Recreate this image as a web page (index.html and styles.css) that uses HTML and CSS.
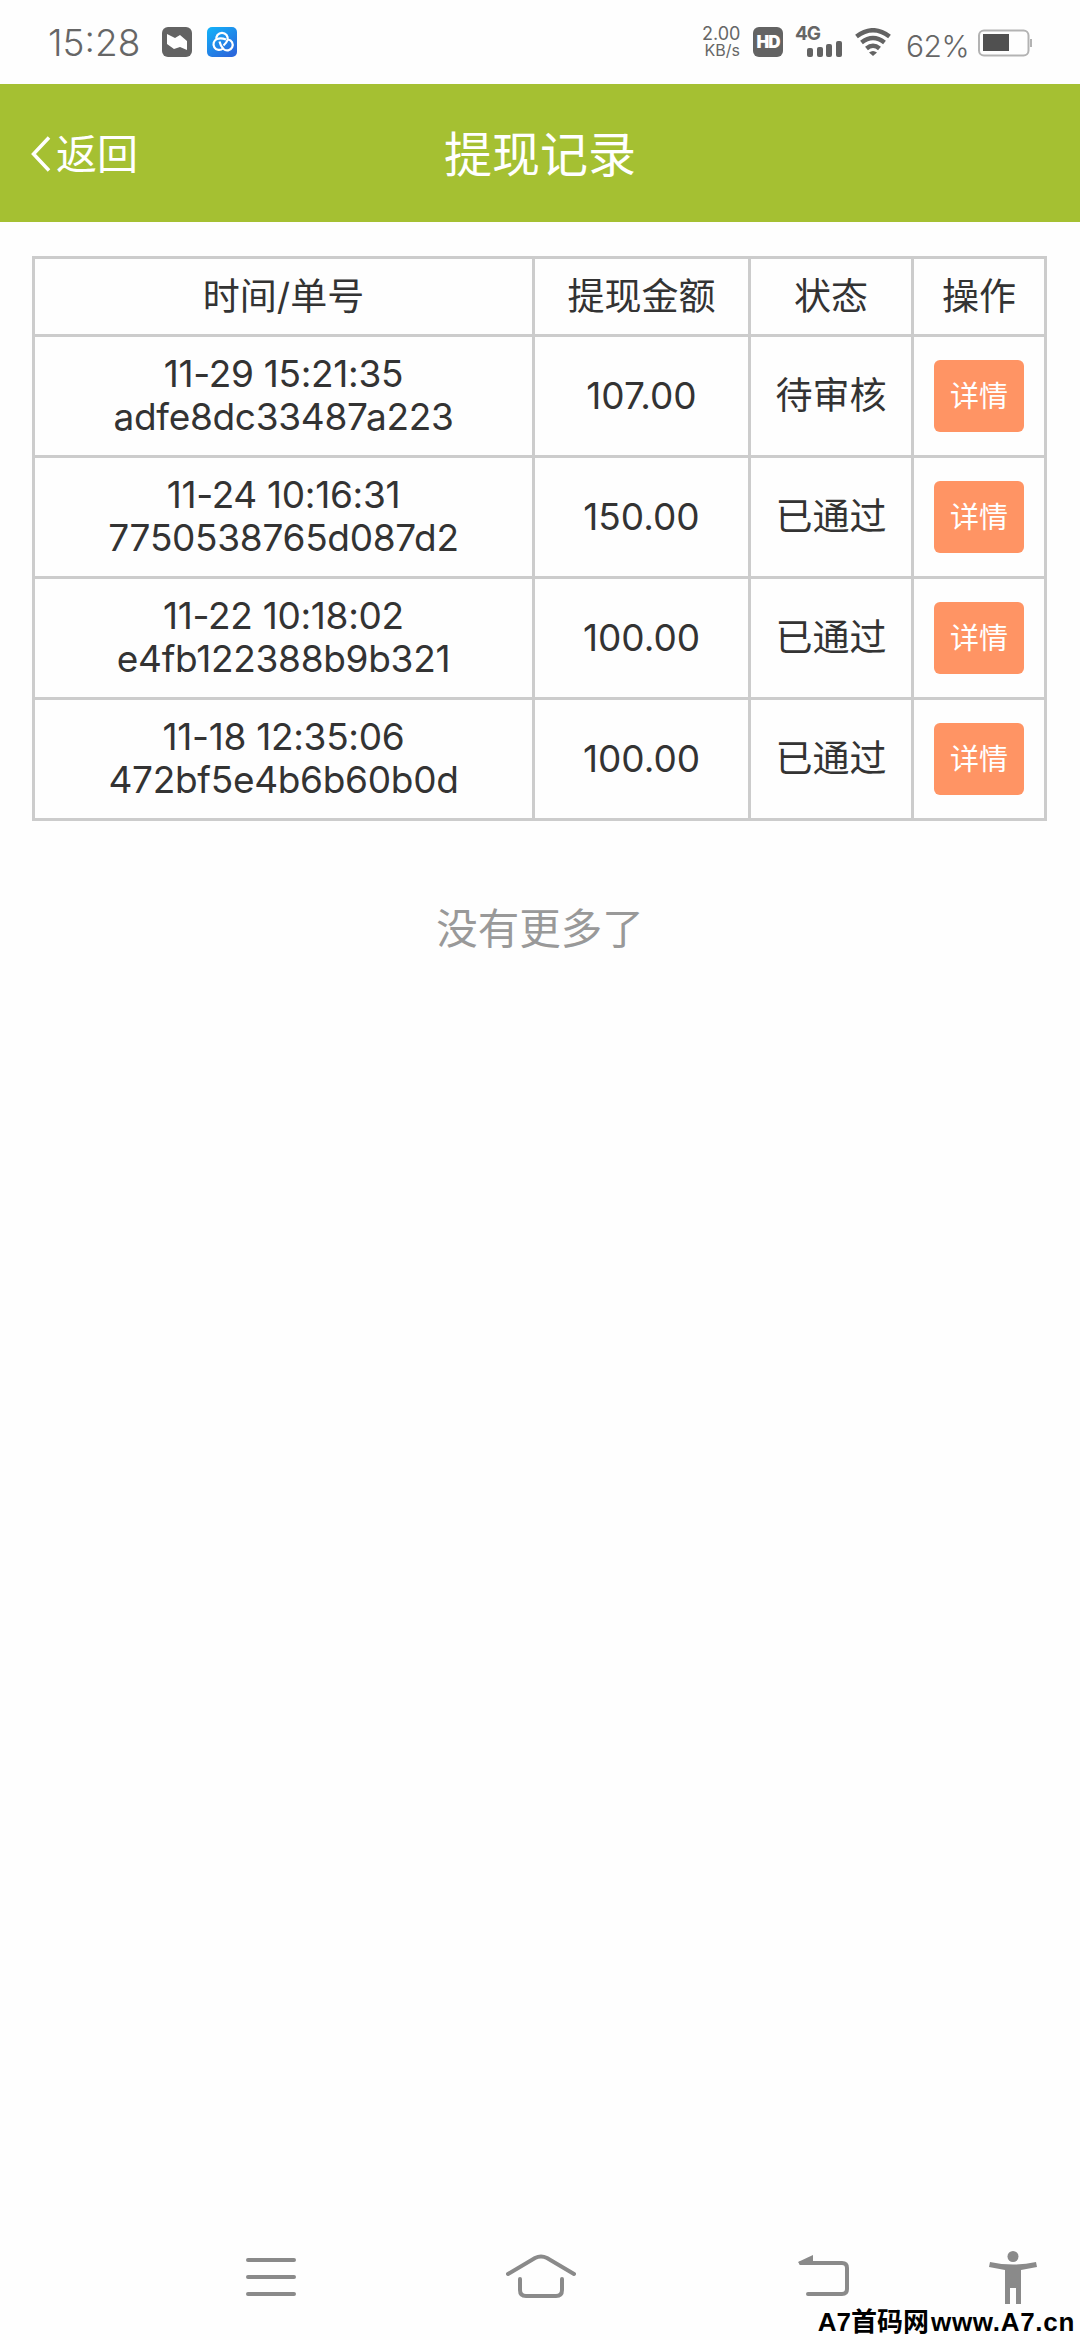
FILE: index.html
```html
<!DOCTYPE html>
<html lang="zh-CN">

<head>
  <meta charset="UTF-8">
  <title>提现记录</title>
  <link rel="stylesheet" href="styles.css">
</head>

<body>
  <div class="page">
    <div class="status-bar">
      <span class="time">15:28</span>
      <svg class="app-icon" width="30" height="30" viewBox="0 0 30 30">
        <rect width="30" height="30" rx="6" fill="#636363" />
        <path d="M5 7l8 4 5-3 7 6v9l-7-3-6 2-7-5z" fill="#fff" />
      </svg>
      <svg class="app-icon-blue" width="30" height="30" viewBox="0 0 30 30">
        <defs>
          <linearGradient id="blue" x1="0" y1="0" x2="0.7" y2="1">
            <stop offset="0" stop-color="#12b4fa" />
            <stop offset="1" stop-color="#2a68dc" />
          </linearGradient>
        </defs>
        <rect width="30" height="30" rx="5" fill="url(#blue)" />
        <g fill="none" stroke="#fff" stroke-width="2.200">
          <path d="M9.500 13a5.700 5.700 0 1 1 11 0q-1 3-4 5.500" />
          <path d="M21 12.500a5.500 5.500 0 1 1-4.500 9.500q-3-3-4-7.500" />
          <path d="M16 21.500a5.700 5.700 0 1 1-6-9.500q4-1.500 9 .5" />
        </g>
      </svg>
      <div class="speed">
        <span>2.00</span>
        <span class="unit">KB/s</span>
      </div>
      <span class="hd">HD</span>
      <div class="signal">
        <span class="net">4G</span>
        <svg width="36" height="16" viewBox="0 0 36 16" fill="#636363">
          <rect x="0" y="7" width="6" height="9" rx="2" />
          <rect x="10" y="6" width="6" height="10" rx="2" />
          <rect x="19" y="3" width="6" height="13" rx="2" />
          <rect x="29" y="0" width="6" height="16" rx="2" />
        </svg>
      </div>
      <svg class="wifi" width="36" height="28" viewBox="0 0 36 28" fill="none" stroke="#636363" stroke-width="4.500">
        <path d="M1.500 8.500Q18-4 34.500 8.500" />
        <path d="M6.500 14.500Q18 5.500 29.500 14.500" />
        <path d="M11.500 20.500Q18 15 24.500 20.500" />
        <path d="M14 24.500q4-3 8 0L18 28z" fill="#636363" stroke="none" />
      </svg>
      <span class="percent">62%</span>
      <svg class="battery" width="55" height="28" viewBox="0 0 55 28">
        <rect x="1" y="1.500" width="49.500" height="25" rx="5" fill="none" stroke="#b3b3b3" stroke-width="2" />
        <rect x="5" y="5" width="26" height="17" fill="#505050" />
        <rect x="52" y="10" width="2" height="8" fill="#b3b3b3" />
      </svg>
    </div>

    <div class="header">
      <a class="back">
        <svg width="20" height="36" viewBox="0 0 20 36" fill="none" stroke="#fff" stroke-width="3.500">
          <path d="M18 1.500L2.500 18 18 34.500" />
        </svg>
        <span>返回</span>
      </a>
      <h1>提现记录</h1>
    </div>

    <div class="content">
      <table>
        <colgroup>
          <col class="col-order">
          <col class="col-money">
          <col class="col-state">
          <col class="col-action">
        </colgroup>
        <tr>
          <th>时间/单号</th>
          <th>提现金额</th>
          <th>状态</th>
          <th>操作</th>
        </tr>
        <tr>
          <td><div class="date">11-29 15:21:35</div><div class="order">adfe8dc33487a223</div></td>
          <td class="money">107.00</td>
          <td>待审核</td>
          <td><button class="detail">详情</button></td>
        </tr>
        <tr>
          <td><div class="date">11-24 10:16:31</div><div class="order">7750538765d087d2</div></td>
          <td class="money">150.00</td>
          <td>已通过</td>
          <td><button class="detail">详情</button></td>
        </tr>
        <tr>
          <td><div class="date">11-22 10:18:02</div><div class="order">e4fb122388b9b321</div></td>
          <td class="money">100.00</td>
          <td>已通过</td>
          <td><button class="detail">详情</button></td>
        </tr>
        <tr>
          <td><div class="date">11-18 12:35:06</div><div class="order">472bf5e4b6b60b0d</div></td>
          <td class="money">100.00</td>
          <td>已通过</td>
          <td><button class="detail">详情</button></td>
        </tr>
      </table>
      <p class="no-more">没有更多了</p>
    </div>

    <div class="nav-bar">
      <svg class="nav-menu" width="50" height="46" viewBox="0 0 50 46">
        <path d="M2 10h46M2 27h46M2 44h46" />
      </svg>
      <svg class="nav-home" width="70" height="48" viewBox="0 0 70 48">
        <path d="M2 24L29 8q6-3 12 0L68 24" />
        <path d="M14 29v11q0 6 6 6h30q6 0 6-6V29" />
      </svg>
      <svg class="nav-back" width="52" height="46" viewBox="0 0 52 46">
        <path d="M3 13h41q5 0 5 5v21q0 5-5 5H10" />
        <path class="fill" d="M0 12L15 5v10H2z" />
      </svg>
      <svg class="nav-person" width="48" height="54" viewBox="0 0 48 54">
        <circle class="fill" cx="24" cy="6.500" r="5.500" />
        <path class="fill" d="M1 12q23 5 46 0l1 5-16 3v34h-5V38h-6v16h-5V20L0 17z" />
      </svg>
    </div>

    <div class="watermark"><span class="site">A7首码网</span><span class="url">www.A7.cn</span></div>
  </div>
</body>

</html>
```
FILE: styles.css
```css
* {
  box-sizing: border-box;
}

body {
  margin: 0;
  background-color: #fefefe;
  color: #333;
  font-family: Inter, "Noto Sans CJK SC", sans-serif;
}

svg {
  display: block;
  flex: none;
}

.page {
  position: relative;
  display: flex;
  flex-direction: column;
  height: 2340px;
  overflow: hidden;
}

/* status bar */
.status-bar {
  display: flex;
  align-items: center;
  height: 84px;
  padding: 0 47px 0 48px;
  color: #666;
}

.time {
  width: 114px;
  font-size: 37px;
  font-weight: 350;
}

.app-icon-blue {
  margin-left: 15px;
}

.speed {
  display: flex;
  flex-direction: column;
  width: 38px;
  margin-left: auto;
  font-size: 18px;
  line-height: 17px;
  text-align: right;
}

.speed .unit {
  font-size: 16px;
}

.hd {
  width: 30px;
  height: 30px;
  margin-left: 13px;
  border-radius: 6px;
  background-color: #636363;
  color: #fff;
  font-size: 17px;
  font-weight: 900;
  letter-spacing: -1px;
  line-height: 30px;
  text-align: center;
}

.signal {
  width: 48px;
  margin-left: 12px;
}

.signal .net {
  display: block;
  height: 14px;
  font-size: 19px;
  font-weight: 700;
  letter-spacing: -1px;
  line-height: 13px;
}

.signal svg {
  margin-left: 12px;
}

.wifi {
  margin-left: 12px;
}

.percent {
  width: 72px;
  margin-left: 15px;
  padding-top: 8px;
  font-size: 30px;
  font-weight: 350;
  letter-spacing: -0.5px;
}

.battery {
  margin-top: 2px;
}

/* header */
.header {
  display: grid;
  grid-template-columns: 1fr auto 1fr;
  align-items: center;
  height: 138px;
  padding: 0 31px 4px;
  background-color: #a5c032;
  color: #fff;
}

.header h1 {
  margin: 0;
  font-size: 48px;
  font-weight: 400;
}

.back {
  display: flex;
  align-items: center;
  gap: 5px;
  font-size: 41px;
}

.back svg {
  margin-top: 5px;
}

/* list */
.content {
  flex: 1;
  padding: 34px 32px;
}

table {
  width: 1015px;
  border-collapse: collapse;
  table-layout: fixed;
}

th,
td {
  height: 121px;
  padding: 0;
  border: 3px solid #ccc;
  font-size: 37px;
  font-weight: 400;
  line-height: 43px;
  text-align: center;
}

td {
  padding-bottom: 2px;
}

th {
  height: 78px;
}

.col-order {
  width: 500px;
}

.col-money {
  width: 216px;
}

.col-state {
  width: 163px;
}

.col-action {
  width: 133px;
}

.date,
.order {
  letter-spacing: -0.3px;
}

.detail {
  display: block;
  width: 90px;
  height: 72px;
  margin: 2px auto 0;
  padding: 0 0 5px;
  border: none;
  border-radius: 6px;
  background-color: #ff9464;
  color: #fff;
  font-family: inherit;
  font-size: 29px;
}

.no-more {
  margin: 78px 0 0;
  color: #999;
  font-size: 41.5px;
  line-height: 60px;
  text-align: center;
}

/* bottom navigation */
.nav-bar {
  display: flex;
  align-items: flex-start;
  height: 90px;
  padding-left: 246px;
}

.nav-bar path {
  fill: none;
  stroke: #8a8a8a;
  stroke-width: 4;
  stroke-linecap: round;
}

.nav-bar .fill {
  fill: #8a8a8a;
  stroke: none;
}

.nav-home {
  margin-left: 210px;
}

.nav-back {
  margin-left: 222px;
}

.nav-person {
  margin-left: 139px;
}

.watermark {
  position: absolute;
  right: 5px;
  bottom: 0;
  color: #000;
  font-family: "Liberation Sans", "Noto Sans CJK SC", sans-serif;
  font-size: 26px;
  font-weight: 700;
  line-height: 36px;
  white-space: nowrap;
}

.url {
  margin-left: 2px;
  letter-spacing: 0.7px;
}
```
